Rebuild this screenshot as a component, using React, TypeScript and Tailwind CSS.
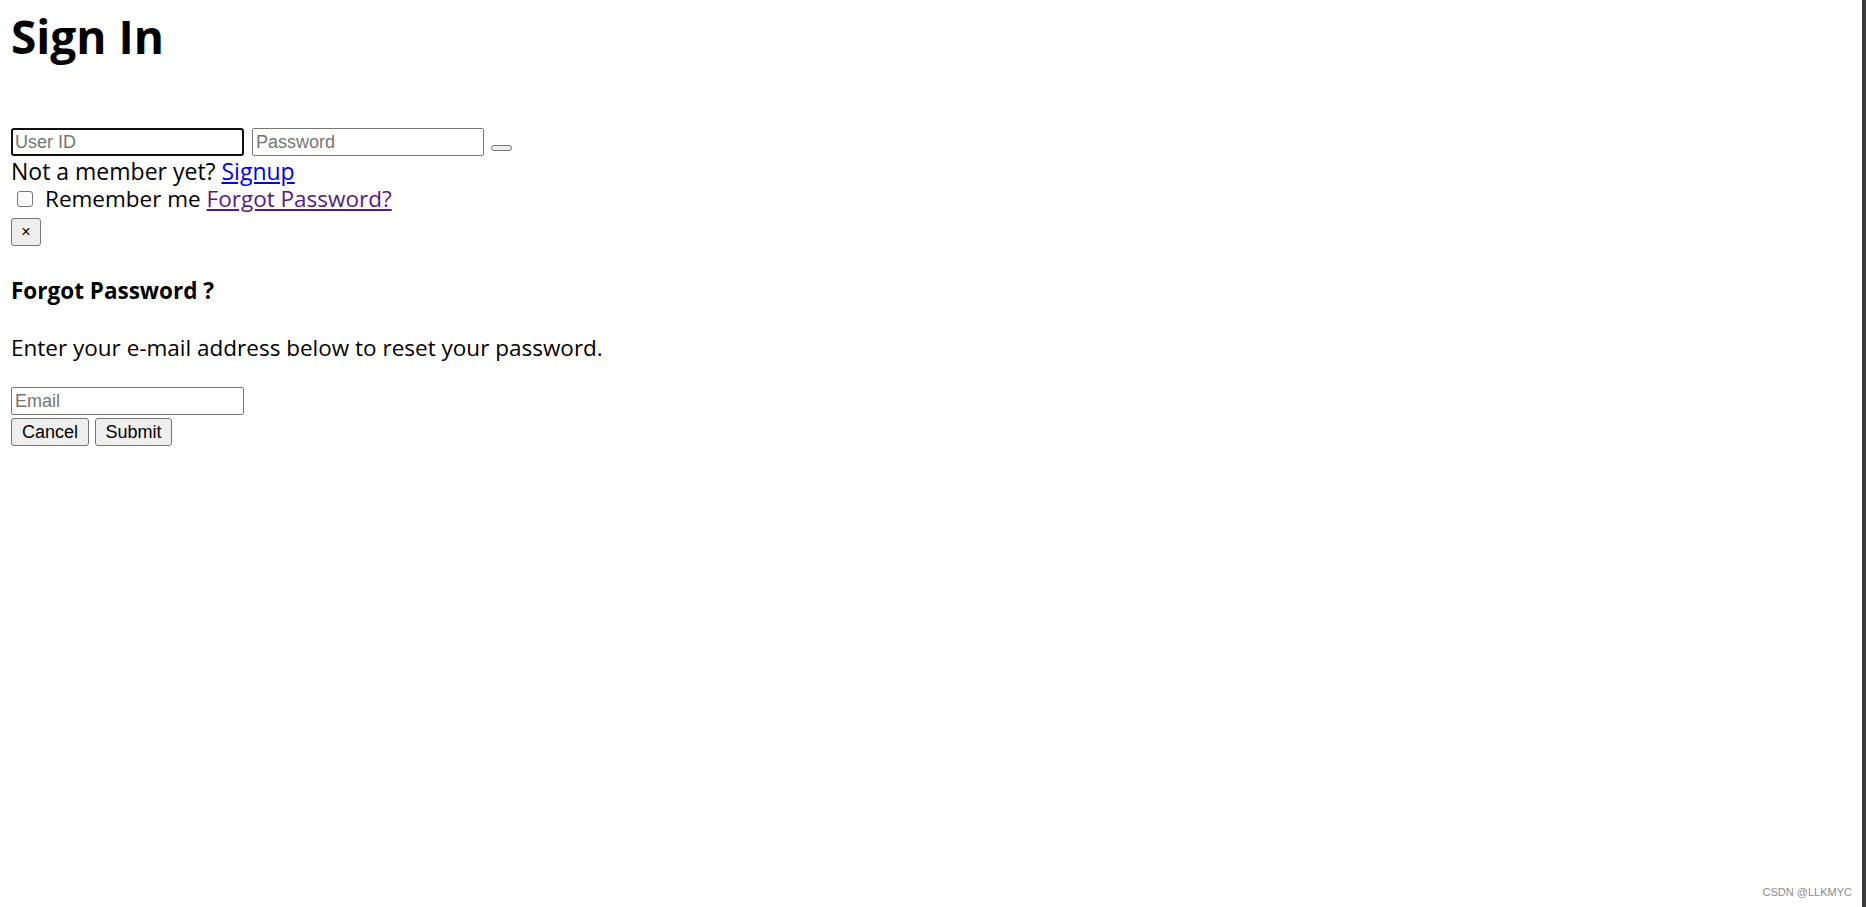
import React from "react";

export default function App() {
  const arial = { fontFamily: '"Liberation Sans", Arial, sans-serif' };
  return (
    <div className="flex h-screen w-full bg-white relative overflow-hidden">
      <main
        className="flex-1 pl-[11px] text-black text-[22.5px]"
        style={{ fontFamily: '"Open Sans", "Noto Sans", sans-serif' }}
      >
        <h1 className="m-0 h-[72px] text-[46px] font-bold leading-[72px]">Sign In</h1>

        <div className="mt-[56px] flex items-start">
          <input
            placeholder="User ID"
            className="h-[28px] w-[233px] rounded-[3px] border-2 border-[#101010] px-[2px] text-[18px] text-black placeholder:text-[#757575] outline-none"
            style={arial}
          />
          <input
            type="password"
            placeholder="Password"
            className="ml-[8px] h-[28px] w-[232px] rounded-[2px] border border-[#767676] px-[3px] text-[18px] text-black placeholder:text-[#757575] outline-none"
            style={arial}
          />
          <button className="ml-[7px] mt-[17px] h-[6px] w-[21px] rounded-[3px] border border-[#767676] bg-[#efefef]"></button>
        </div>

        <div className="h-[28px] pt-[2px] text-[23px] leading-[26px]">
          Not a member yet?{" "}
          <a href="#" className="text-[#0000ee] underline">
            Signup
          </a>
        </div>

        <div className="flex h-[30px] items-start leading-[30px]">
          <input
            type="checkbox"
            className="ml-[6px] mt-[7px] h-[16px] w-[16px] appearance-none rounded-[3px] border border-[#767676] bg-white"
          />
          <span className="ml-[12px]">
            Remember me{" "}
            <a href="#" className="text-[#551a8b] underline">
              Forgot Password?
            </a>
          </span>
        </div>

        <button
          className="mt-[4px] flex h-[28px] w-[30px] items-center justify-center rounded-[3px] border border-[#767676] bg-[#efefef] text-[16px] leading-none text-black"
          style={arial}
        >
          ×
        </button>

        <h4 className="mt-[30px] h-[30px] font-bold leading-[30px]">Forgot Password ?</h4>

        <p className="mt-[27px] h-[30px] leading-[30px]">
          Enter your e-mail address below to reset your password.
        </p>

        <input
          type="email"
          placeholder="Email"
          className="mt-[24px] block h-[28px] w-[233px] rounded-[2px] border border-[#767676] px-[3px] text-[18px] text-black placeholder:text-[#757575] outline-none"
          style={arial}
        />

        <div className="mt-[3px] flex gap-[6px] text-[18px]" style={arial}>
          <button className="h-[28px] w-[78px] rounded-[3px] border border-[#767676] bg-[#efefef] text-black">
            Cancel
          </button>
          <button className="h-[28px] w-[77px] rounded-[3px] border border-[#767676] bg-[#efefef] text-black">
            Submit
          </button>
        </div>
      </main>

      <div className="h-full w-[4px] bg-[#3c3c3c]"></div>

      <span
        className="absolute bottom-[9px] right-[14px] text-[11px] leading-none text-[#8c8c8c]"
        style={arial}
      >
        CSDN @LLKMYC
      </span>
    </div>
  );
}
